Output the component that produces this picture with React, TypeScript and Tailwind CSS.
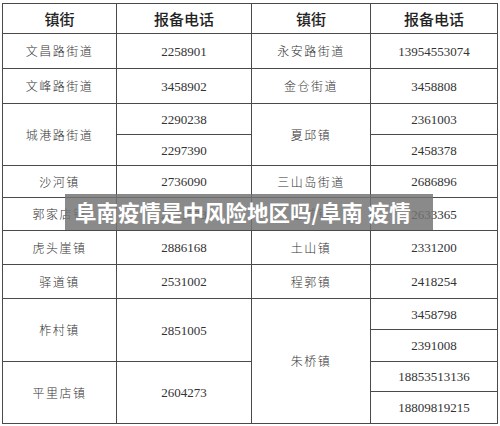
const cjk = "font-['Noto_Sans_CJK_SC',sans-serif]";
const num = "font-['Liberation_Serif','Times_New_Roman',serif]";

type Cell = { text: string; col: string; row: string; kind: "head" | "name" | "num" };

const cells: Cell[] = [
  { text: "镇街", col: "col-start-1", row: "row-start-1", kind: "head" },
  { text: "报备电话", col: "col-start-2", row: "row-start-1", kind: "head" },
  { text: "镇街", col: "col-start-3", row: "row-start-1", kind: "head" },
  { text: "报备电话", col: "col-start-4", row: "row-start-1", kind: "head" },

  { text: "文昌路街道", col: "col-start-1", row: "row-start-2", kind: "name" },
  { text: "文峰路街道", col: "col-start-1", row: "row-start-3", kind: "name" },
  { text: "城港路街道", col: "col-start-1", row: "row-start-4 row-span-2", kind: "name" },
  { text: "沙河镇", col: "col-start-1", row: "row-start-6", kind: "name" },
  { text: "郭家店镇", col: "col-start-1", row: "row-start-7", kind: "name" },
  { text: "虎头崖镇", col: "col-start-1", row: "row-start-8", kind: "name" },
  { text: "驿道镇", col: "col-start-1", row: "row-start-9", kind: "name" },
  { text: "柞村镇", col: "col-start-1", row: "row-start-10 row-span-2", kind: "name" },
  { text: "平里店镇", col: "col-start-1", row: "row-start-12 row-span-2", kind: "name" },

  { text: "2258901", col: "col-start-2", row: "row-start-2", kind: "num" },
  { text: "3458902", col: "col-start-2", row: "row-start-3", kind: "num" },
  { text: "2290238", col: "col-start-2", row: "row-start-4", kind: "num" },
  { text: "2297390", col: "col-start-2", row: "row-start-5", kind: "num" },
  { text: "2736090", col: "col-start-2", row: "row-start-6", kind: "num" },
  { text: "2621778", col: "col-start-2", row: "row-start-7", kind: "num" },
  { text: "2886168", col: "col-start-2", row: "row-start-8", kind: "num" },
  { text: "2531002", col: "col-start-2", row: "row-start-9", kind: "num" },
  { text: "2851005", col: "col-start-2", row: "row-start-10 row-span-2", kind: "num" },
  { text: "2604273", col: "col-start-2", row: "row-start-12 row-span-2", kind: "num" },

  { text: "永安路街道", col: "col-start-3", row: "row-start-2", kind: "name" },
  { text: "金仓街道", col: "col-start-3", row: "row-start-3", kind: "name" },
  { text: "夏邱镇", col: "col-start-3", row: "row-start-4 row-span-2", kind: "name" },
  { text: "三山岛街道", col: "col-start-3", row: "row-start-6", kind: "name" },
  { text: "金城镇", col: "col-start-3", row: "row-start-7", kind: "name" },
  { text: "土山镇", col: "col-start-3", row: "row-start-8", kind: "name" },
  { text: "程郭镇", col: "col-start-3", row: "row-start-9", kind: "name" },
  { text: "朱桥镇", col: "col-start-3", row: "row-start-10 row-span-4", kind: "name" },

  { text: "13954553074", col: "col-start-4", row: "row-start-2", kind: "num" },
  { text: "3458808", col: "col-start-4", row: "row-start-3", kind: "num" },
  { text: "2361003", col: "col-start-4", row: "row-start-4", kind: "num" },
  { text: "2458378", col: "col-start-4", row: "row-start-5", kind: "num" },
  { text: "2686896", col: "col-start-4", row: "row-start-6", kind: "num" },
  { text: "2633365", col: "col-start-4", row: "row-start-7", kind: "num" },
  { text: "2331200", col: "col-start-4", row: "row-start-8", kind: "num" },
  { text: "2418254", col: "col-start-4", row: "row-start-9", kind: "num" },
  { text: "3458798", col: "col-start-4", row: "row-start-10", kind: "num" },
  { text: "2391008", col: "col-start-4", row: "row-start-11", kind: "num" },
  { text: "18853513136", col: "col-start-4", row: "row-start-12", kind: "num" },
  { text: "18809819215", col: "col-start-4", row: "row-start-13", kind: "num" },
];

const kindClass = {
  head: `${cjk} text-[15px] font-medium text-[#222]`,
  name: `${cjk} text-[12px] font-light tracking-[1.5px] text-[#333]`,
  num: `${num} text-[13px] text-[#333]`,
};

export default function App() {
  return (
    <div className="relative w-[500px] h-[426px] bg-white overflow-hidden">
      <div className="ml-[2px] mt-[3px] w-[496px] border-l border-t border-[#4a4a4a] grid grid-cols-[114px_135px_119px_127px] grid-rows-[30px_35px_35px_31px_31px_32px_33px_34px_34px_31px_32px_30px_32px]">
        {cells.map((c, i) => (
          <div
            key={i}
            className={`${c.col} ${c.row} border-r border-b border-[#4a4a4a] flex items-center justify-center leading-none ${kindClass[c.kind]}`}
          >
            {c.text}
          </div>
        ))}
      </div>

      {/* caption banner over the table */}
      <div className="absolute left-[65px] top-[194px] w-[368px] h-[36px] bg-[rgba(115,115,115,0.84)] flex items-center pl-[10px]">
        <span className={`${cjk} text-[21.5px] font-bold text-white leading-none whitespace-nowrap`}>
          阜南疫情是中风险地区吗/阜南 疫情
        </span>
      </div>
    </div>
  );
}
